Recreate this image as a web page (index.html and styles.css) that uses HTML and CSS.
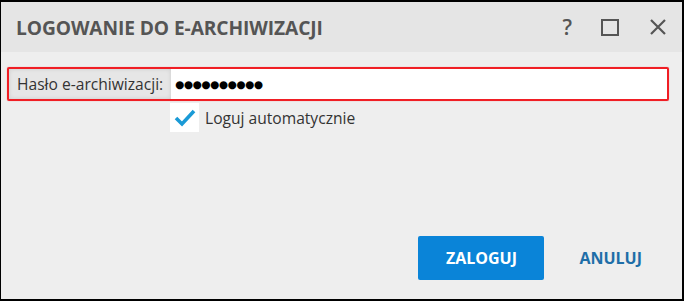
FILE: index.html
```html
<!DOCTYPE html>
<html lang="pl">
<head>
<meta charset="utf-8">
<link rel="stylesheet" href="styles.css">
</head>
<body>
<div class="window">
  <div class="titlebar">
    <div class="title">LOGOWANIE DO E-ARCHIWIZACJI</div>
    <div class="controls">
      <span class="ctl help">?</span>
      <span class="ctl max"><svg width="18" height="17" viewBox="0 0 18 17"><rect x="1" y="1" width="16" height="15" fill="none" stroke="#555" stroke-width="2"/></svg></span>
      <span class="ctl close"><svg width="16" height="16" viewBox="0 0 16 16"><path d="M1 1 L15 15 M15 1 L1 15" stroke="#555" stroke-width="2.2" fill="none"/></svg></span>
    </div>
  </div>
  <div class="content">
    <div class="field">
      <div class="label">Hasło e-archiwizacji:</div>
      <div class="input">●●●●●●●●●●</div>
    </div>
    <div class="check-row">
      <span class="checkbox"><svg width="22" height="18" viewBox="0 0 22 18"><path d="M2 9 L8 15 L20 2" stroke="#1a9ad6" stroke-width="3.6" fill="none" stroke-linejoin="miter"/></svg></span>
      <span class="check-label">Loguj automatycznie</span>
    </div>
    <div class="spacer"></div>
    <div class="buttons">
      <button class="btn primary">ZALOGUJ</button>
      <button class="btn link">ANULUJ</button>
    </div>
  </div>
</div>
</body>
</html>
```
FILE: styles.css
```css
html, body {
  margin: 0;
  padding: 0;
  background: #fff;
}
body {
  font-family: "Open Sans", "Noto Sans", sans-serif;
}
.window {
  box-sizing: border-box;
  width: 684px;
  height: 301px;
  border: 1px solid #000;
  border-top-width: 2px;
  border-right-width: 2px;
  border-bottom-width: 2px;
  background: #eeeeee;
  display: flex;
  flex-direction: column;
}
.titlebar {
  height: 50px;
  background: #e5e5e5;
  display: flex;
  align-items: center;
  padding: 0 16px 0 15px;
  flex-shrink: 0;
}
.title {
  flex: 1;
  font-size: 19.2px;
  font-weight: 700;
  color: #555;
  letter-spacing: -0.1px;
}
.controls {
  display: flex;
  align-items: center;
}
.ctl {
  display: flex;
  align-items: center;
  justify-content: center;
  color: #555;
}
.help {
  font-size: 21px;
  font-weight: 600;
  font-family: "Open Sans", sans-serif;
  margin-right: 29px;
  line-height: 1;
}
.max { margin-right: 31px; }
.content {
  flex: 1;
  display: flex;
  flex-direction: column;
  padding: 15px 13px 19px 6px;
}
.field {
  display: flex;
  height: 30px;
  border: 2px solid #f01e24;
  border-radius: 2px;
  box-shadow: 0 0 1px rgba(240,30,36,0.6);
}
.label {
  width: 154px;
  padding-left: 8px;
  background: #e6e6e6;
  box-shadow: inset 0 0 4px rgba(0,0,0,0.12);
  display: flex;
  align-items: center;
  font-size: 15.6px;
  color: #333;
}
.input {
  flex: 1;
  background: #fff;
  display: flex;
  align-items: center;
  padding-left: 4px;
  font-family: "DejaVu Sans", sans-serif;
  font-size: 10.5px;
  letter-spacing: -0.4px;
  color: #000;
}
.check-row {
  display: flex;
  align-items: center;
  margin-left: 163px;
  margin-top: 2px;
}
.checkbox {
  width: 29px;
  height: 29px;
  background: #fff;
  display: flex;
  align-items: center;
  justify-content: center;
}
.check-label {
  margin-left: 6px;
  font-size: 15.6px;
  color: #333;
}
.spacer { flex: 1; }
.buttons {
  display: flex;
  justify-content: flex-end;
  align-items: center;
}
.btn {
  font-family: "Open Sans", sans-serif;
  font-weight: 700;
  font-size: 16px;
  border: none;
  cursor: pointer;
}
.primary {
  width: 126px;
  height: 44px;
  background: #0a84d8;
  color: #fff;
  border-radius: 2px;
}
.link {
  background: transparent;
  color: #1e6ea8;
  margin-left: 35px;
  margin-right: 27px;
  padding: 0;
}
```
